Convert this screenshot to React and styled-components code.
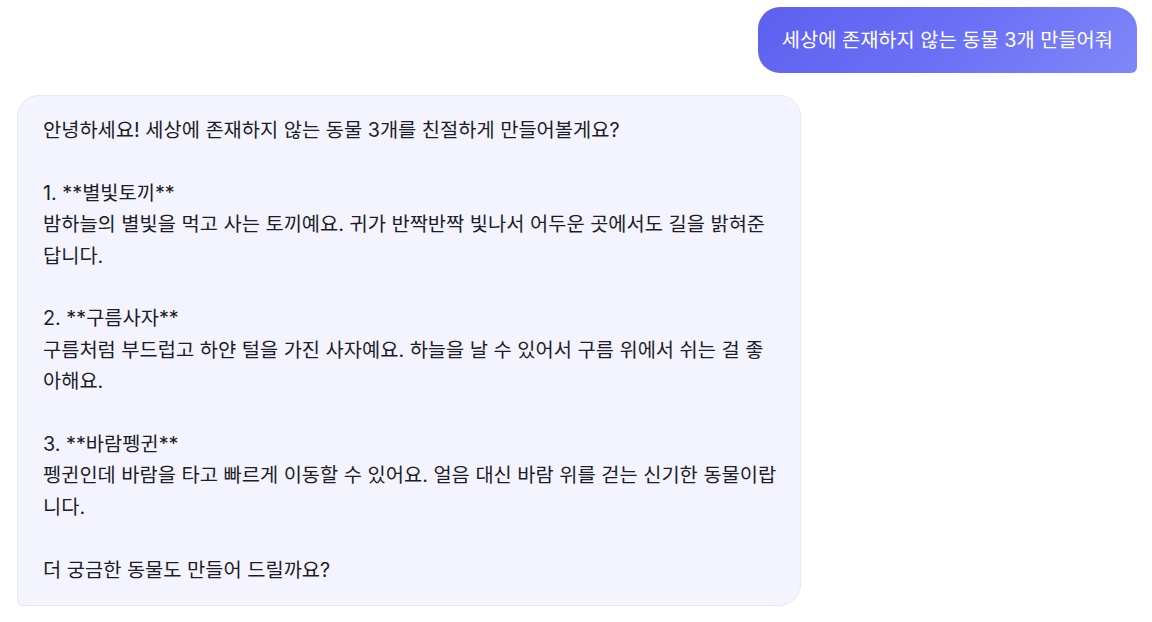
import React from "react";
import styled, { createGlobalStyle } from "styled-components";

const Global = createGlobalStyle`
  html, body { margin: 0; padding: 0; background: #ffffff; }
  body { font-family: "Inter", "Noto Sans CJK KR", sans-serif; }
`;

const Thread = styled.div`
  display: flex;
  flex-direction: column;
  gap: 22px;
  padding: 7px 15px 16px 17px;
`;

const UserBubble = styled.div`
  align-self: flex-end;
  background: linear-gradient(135deg, #5d60f0 0%, #6a70f5 50%, #8087f8 100%);
  color: #ffffff;
  font-size: 19.8px;
  line-height: 32px;
  padding: 17px 24px;
  border-radius: 22px;
  border-bottom-right-radius: 6px;
  white-space: nowrap;
`;

const BotBubble = styled.div`
  align-self: flex-start;
  width: 784px;
  box-sizing: border-box;
  background: #f4f4fe;
  border: 1px solid #e7e7f6;
  border-radius: 22px;
  border-bottom-left-radius: 6px;
  padding: 19px 21px 19px 25px;
  color: #1d1d27;
  font-size: 19.8px;
  line-height: 31.4px;
  white-space: pre-wrap;
`;

const text = `안녕하세요! 세상에 존재하지 않는 동물 3개를 친절하게 만들어볼게요?

1. **별빛토끼**
밤하늘의 별빛을 먹고 사는 토끼예요. 귀가 반짝반짝 빛나서 어두운 곳에서도 길을 밝혀준답니다.

2. **구름사자**
구름처럼 부드럽고 하얀 털을 가진 사자예요. 하늘을 날 수 있어서 구름 위에서 쉬는 걸 좋아해요.

3. **바람펭귄**
펭귄인데 바람을 타고 빠르게 이동할 수 있어요. 얼음 대신 바람 위를 걷는 신기한 동물이랍니다.

더 궁금한 동물도 만들어 드릴까요?`;

export default function App() {
  return (
    <>
      <Global />
      <Thread>
        <UserBubble>세상에 존재하지 않는 동물 3개 만들어줘</UserBubble>
        <BotBubble>{text}</BotBubble>
      </Thread>
    </>
  );
}
